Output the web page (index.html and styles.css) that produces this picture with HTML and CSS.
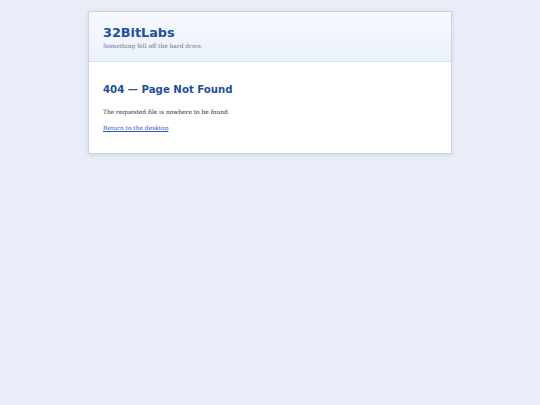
FILE: index.html
```html
<!DOCTYPE html>
<html>
<head>
<meta charset="utf-8">
<link rel="stylesheet" href="styles.css">
<title>404</title>
</head>
<body>
<div class="card">
  <div class="header">
    <h1 class="brand">32BitLabs</h1>
    <p class="tagline">Something fell off the hard drive.</p>
  </div>
  <div class="content">
    <h2 class="title">404 — Page Not Found</h2>
    <p class="msg">The requested file is nowhere to be found.</p>
    <p class="msg"><a class="link" href="#">Return to the desktop</a></p>
  </div>
</div>
</body>
</html>
```

FILE: styles.css
```css
html, body {
  margin: 0;
  padding: 0;
  background: #e8edf8;
  height: 100%;
}
body {
  padding-top: 11px;
  font-family: "DejaVu Serif", serif;
}
.card {
  width: 362px;
  margin: 0 auto;
  background: #ffffff;
  border: 1px solid #ccd3df;
  box-shadow: 0 1px 4px rgba(80, 100, 140, 0.16);
}
.header {
  background: linear-gradient(#f7faff, #eaf1fc);
  border-bottom: 1px solid #d9e2f0;
  padding: 12px 14px 11px;
}
.brand {
  margin: 0;
  font-family: "DejaVu Sans", sans-serif;
  font-weight: bold;
  font-size: 12.8px;
  line-height: 17px;
  color: #1f4f9e;
}
.tagline {
  margin: 1px 0 0;
  font-size: 5.9px;
  line-height: 8px;
  color: #6b7280;
}
.content {
  padding: 21px 14px 21px;
}
.title {
  margin: 0 0 11px;
  font-family: "DejaVu Sans", sans-serif;
  font-weight: bold;
  font-size: 10.2px;
  line-height: 14px;
  color: #1f4f9e;
}
.msg {
  margin: 0 0 8px;
  font-size: 5.9px;
  line-height: 8px;
  color: #2a2a2a;
}
.msg:last-child { margin-bottom: 0; }
.link {
  color: #2a55b0;
}
```
